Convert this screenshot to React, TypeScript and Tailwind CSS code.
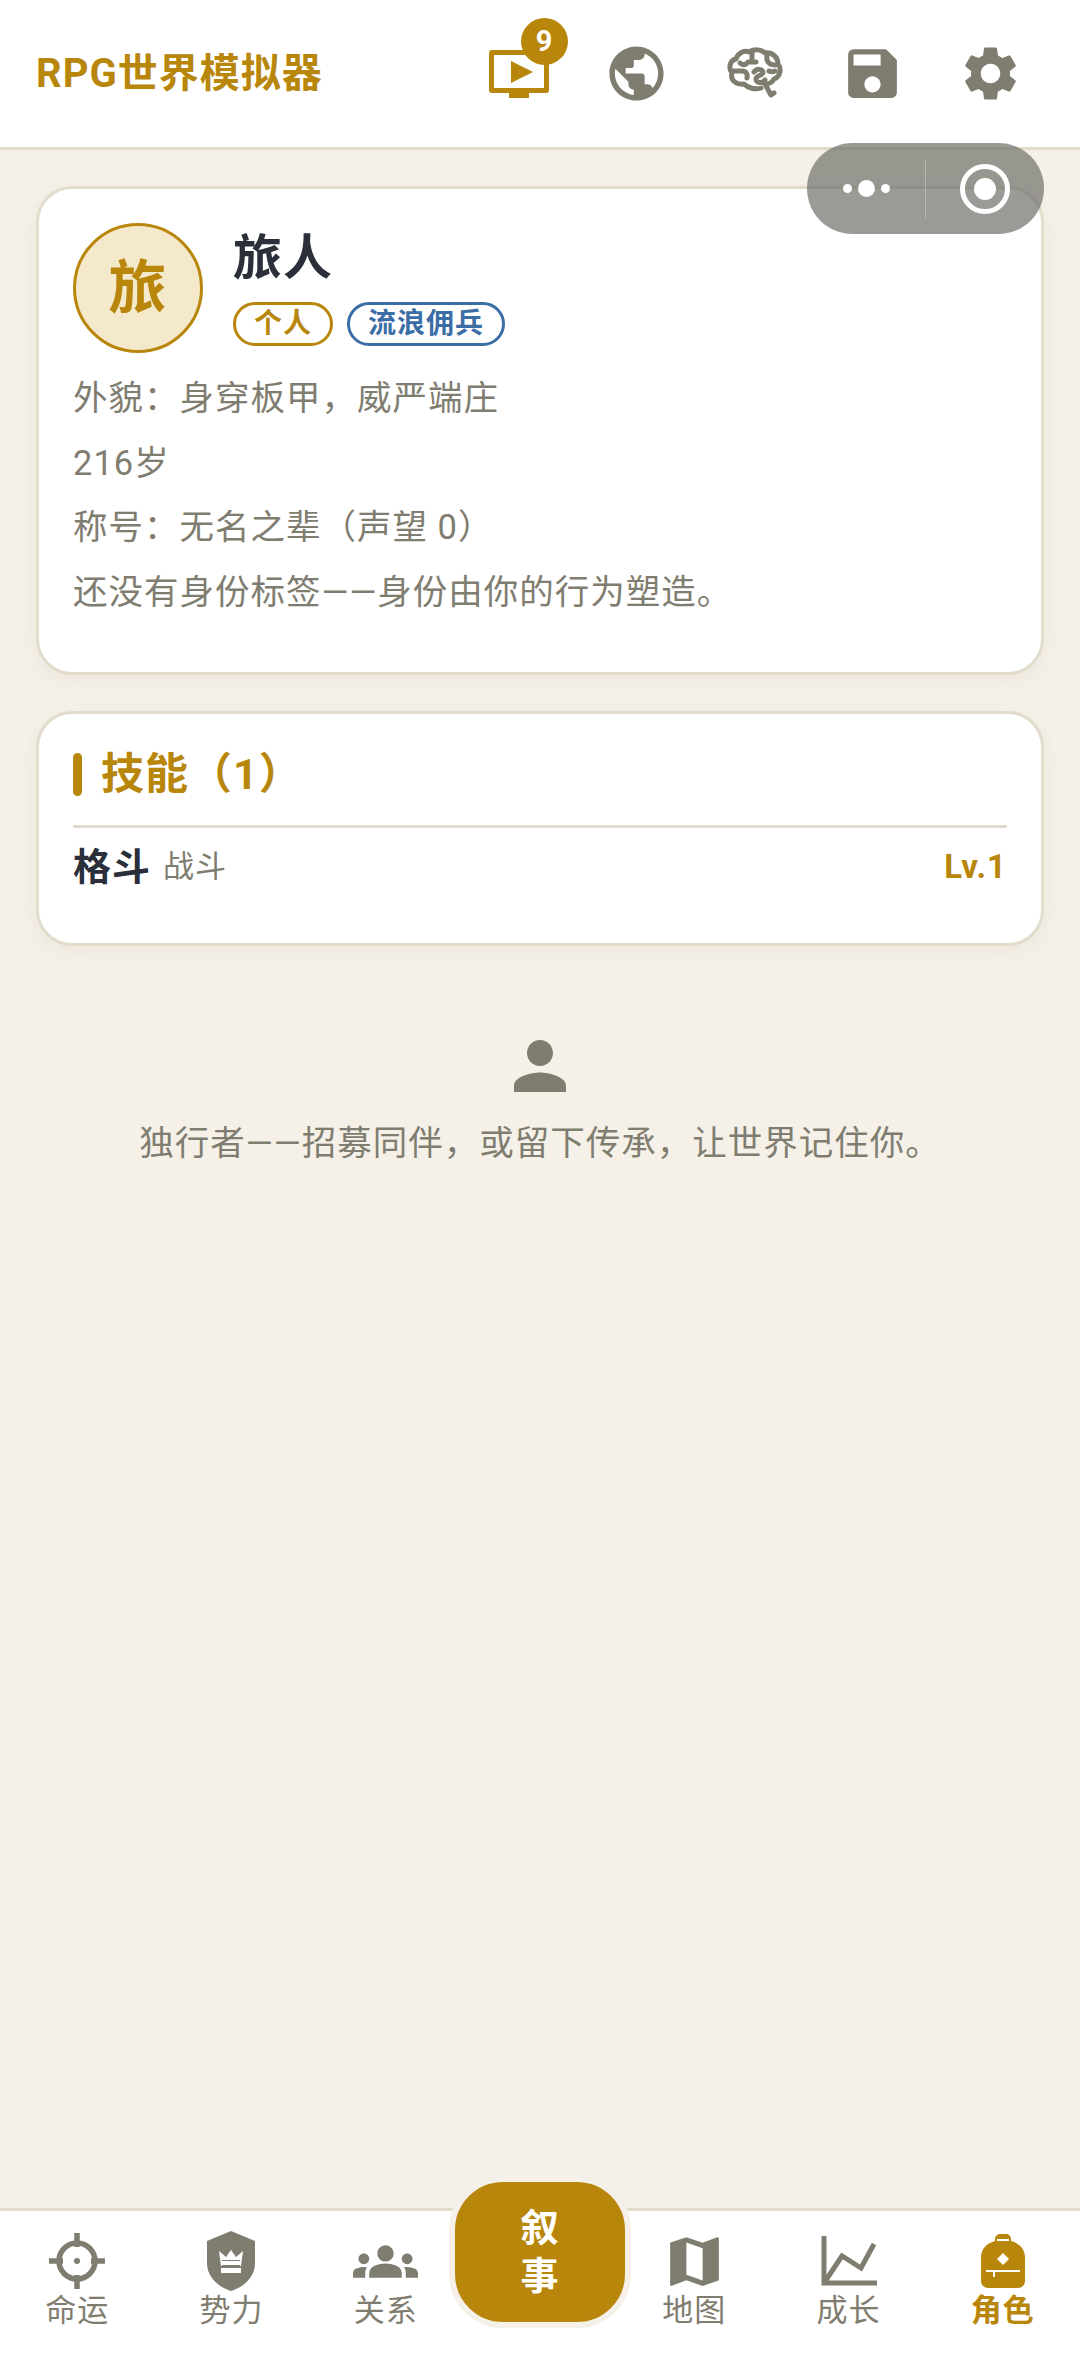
import { MdPublic, MdSave, MdSettings, MdPerson, MdGroups, MdMap } from 'react-icons/md';

const font = { fontFamily: 'Roboto, "Noto Sans CJK SC", sans-serif' };

const VideoIcon = () => (
  <svg width="60" height="48" viewBox="0 0 60 48" fill="#b8860b">
    <path d="M3 0h54a3 3 0 0 1 3 3v37a3 3 0 0 1-3 3H40v5H20v-5H3a3 3 0 0 1-3-3V3a3 3 0 0 1 3-3zm2 5v33h50V5z" fillRule="evenodd" />
    <path d="M22 11l22 11-22 11z" />
  </svg>
);

const BrainIcon = () => (
  <div className="flex h-[65px] w-[65px] items-center justify-center">
    <svg width="56" height="54" viewBox="0 0 56 54" fill="none" stroke="#7f7d70" strokeWidth="5" strokeLinecap="round" strokeLinejoin="round">
      <path d="M34 41c-6 2-13 0-17-4C9 38 3 33 5 26 1 21 3 13 9 12c2-6 8-9 13-7 5-3 12-3 16 1 7-1 13 4 13 11 4 5 2 13-4 15-2 4-5 5-9 5l6 11 3-2" />
      <path d="M25 5v9M21 15h8" />
      <path d="M6 24h9c4 0 6 3 5 7" />
      <path d="M13 16c2 2 4 2 6 1" />
      <path d="M27 25c3-4 8-3 9 0 0 4-7 3-7 7 0 4 6 5 9 1" />
      <path d="M40 9c-1 5 2 9 8 9" />
      <path d="M42 24c2 1 4 1 6 0" />
    </svg>
  </div>
);

const TargetIcon = () => (
  <svg width="56" height="56" viewBox="0 0 56 56" fill="none" stroke="#7f7d70" strokeWidth="5.5">
    <circle cx="28" cy="28" r="18" />
    <path d="M28 0v14M28 42v14M0 28h14M42 28h14" />
    <circle cx="28" cy="28" r="3" fill="#7f7d70" stroke="none" />
  </svg>
);

const ShieldIcon = () => (
  <svg width="50" height="60" viewBox="0 0 50 60">
    <path d="M25 0l24 10v22c0 14-11 24-24 28C12 56 1 46 1 32V10z" fill="#7f7d70" />
    <path d="M13 20l7 6 5-7 5 7 7-6-2 15H15z" fill="#fff" />
    <path d="M15 37h20v5H15z" fill="#fff" />
    <path d="M16 29h18v6H16z" fill="#7f7d70" />
    <path d="M16 30h18v4H16z" fill="#fff" />
  </svg>
);

const ChartIcon = () => (
  <svg width="56" height="50" viewBox="0 0 56 50" fill="none" stroke="#7f7d70">
    <path d="M3 0v47h53" strokeWidth="5" />
    <path d="M5 44l16-24 19 12 13-24" strokeWidth="5" />
  </svg>
);

const BagIcon = () => (
  <svg width="44" height="56" viewBox="0 0 44 56">
    <path d="M14 8V6a5 5 0 0 1 5-5h6a5 5 0 0 1 5 5v2c8 2 14 8 14 16v24a7 7 0 0 1-7 7H7a7 7 0 0 1-7-7V24C0 16 6 10 14 8z" fill="#b8860b" />
    <path d="M16 8h12V6H16z" fill="#fff" />
    <path d="M22 20l6 6-6 6-6-6z" fill="#fff" />
    <path d="M5 37h34v2H14v5h-2v-5H5z" fill="#fff" />
  </svg>
);

const navLeft = [
  { label: '命运', icon: <TargetIcon /> },
  { label: '势力', icon: <ShieldIcon /> },
  { label: '关系', icon: <MdGroups size={65} color="#7f7d70" /> },
];

const navRight = [
  { label: '地图', icon: <MdMap size={65} color="#7f7d70" className="my-[-3px]" /> },
  { label: '成长', icon: <ChartIcon /> },
];

const NavItem = ({ label, icon, active }: { label: string; icon: React.ReactNode; active?: boolean }) => (
  <div className="flex flex-1 flex-col items-center">
    <div className="flex h-[60px] items-center justify-center">{icon}</div>
    <span className={`text-[31px] leading-[40px] ${active ? 'font-bold text-[#b8860b]' : 'text-[#7f7d70]'}`}>{label}</span>
  </div>
);

const App = () => {
  return (
    <div className="relative flex h-[2363px] w-[1080px] flex-col overflow-hidden bg-[#f5f0e8] tracking-[1px]" style={font}>
      <header className="flex h-[150px] items-center justify-between border-b-[3px] border-[#e2dccd] bg-white pl-[36px] pr-[57px]">
        <h1 className="text-[40px] font-bold text-[#b8860b]">RPG世界模拟器</h1>
        <div className="flex items-center gap-[53px]">
          <div className="relative flex h-[65px] w-[65px] items-center justify-center">
            <VideoIcon />
            <span className="absolute right-[-17px] top-[-23px] flex h-[47px] w-[47px] items-center justify-center rounded-full bg-[#b8860b] text-[29px] font-bold text-white">9</span>
          </div>
          <MdPublic size={65} color="#7f7d70" />
          <BrainIcon />
          <MdSave size={65} color="#7f7d70" />
          <MdSettings size={65} color="#7f7d70" />
        </div>
      </header>

      <div className="absolute left-[807px] top-[143px] z-10 flex h-[91px] w-[237px] items-center rounded-full bg-[#6f6f6a]/70">
        <div className="flex flex-1 items-center justify-center gap-[6px]">
          <span className="h-[9px] w-[9px] rounded-full bg-white" />
          <span className="h-[17px] w-[17px] rounded-full bg-white" />
          <span className="h-[9px] w-[9px] rounded-full bg-white" />
        </div>
        <div className="h-[58px] w-px bg-white/30" />
        <div className="flex flex-1 items-center justify-center">
          <div className="flex h-[50px] w-[50px] items-center justify-center rounded-full border-[5px] border-white">
            <div className="h-[22px] w-[22px] rounded-full bg-white" />
          </div>
        </div>
      </div>

      <main className="flex flex-1 flex-col gap-[36px] px-[36px] pt-[36px]">
        <section className="h-[489px] rounded-[36px] border-[3px] border-[#e2dccd] bg-white p-[34px] shadow-[0_6px_18px_rgba(120,100,60,0.06)]">
          <div className="flex items-start gap-[30px]">
            <div className="flex h-[130px] w-[130px] items-center justify-center rounded-full border-[3px] border-[#b8860b] bg-[#f5e9cc] text-[58px] font-bold text-[#b8860b]">旅</div>
            <div>
              <div className="mt-[3px] text-[49px] font-bold leading-[66px] text-[#2a2f3a]">旅人</div>
              <div className="mt-[10px] flex gap-[14px]">
                <span className="flex h-[44px] items-center rounded-full border-[3px] border-[#b8860b] px-[18px] text-[28px] font-bold text-[#b8860b]">个人</span>
                <span className="flex h-[44px] items-center rounded-full border-[3px] border-[#3b6ea5] px-[18px] text-[28px] font-bold text-[#3b6ea5]">流浪佣兵</span>
              </div>
            </div>
          </div>
          <div className="mt-[13px] text-[34.5px] leading-[64.6px] text-[#7f7d70]">
            <p>{'外貌\uFF1A身穿板甲\uFF0C威严端庄'}</p>
            <p>216岁</p>
            <p>{'称号\uFF1A无名之辈\uFF08声望 0\uFF09'}</p>
            <p>还没有身份标签——身份由你的行为塑造。</p>
          </div>
        </section>

        <section className="h-[235px] rounded-[36px] border-[3px] border-[#e2dccd] bg-white px-[34px] pt-[39px] shadow-[0_6px_18px_rgba(120,100,60,0.06)]">
          <div className="flex items-center gap-[19px] pb-[29px]">
            <span className="h-[43px] w-[9px] rounded-full bg-[#b8860b]" />
            <h2 className="text-[43px] font-bold leading-[43px] text-[#b8860b]">{'技能\uFF081\uFF09'}</h2>
          </div>
          <div className="flex items-center justify-between border-t-[3px] border-[#e2dccd] pt-[14px]">
            <div className="flex items-center gap-[12px]">
              <span className="text-[38px] font-bold leading-[50px] text-[#2a2f3a]">格斗</span>
              <span className="text-[31px] text-[#7f7d70]">战斗</span>
            </div>
            <span className="text-[33px] font-bold text-[#b8860b]">Lv.1</span>
          </div>
        </section>

        <div className="mt-[45px] flex flex-col items-center">
          <MdPerson size={78} color="#7f7d70" />
          <p className="mt-[13px] text-[34.5px] text-[#7f7d70]">{'独行者——招募同伴\uFF0C或留下传承\uFF0C让世界记住你。'}</p>
        </div>
      </main>

      <footer className="relative flex h-[155px] items-start border-t-[3px] border-[#e2dccd] bg-white pt-[20px]">
        {navLeft.map((item) => <NavItem key={item.label} {...item} />)}
        <div className="flex-1">
          <div className="absolute left-1/2 top-[-35px] flex h-[152px] w-[182px] -translate-x-1/2 items-center justify-center rounded-[54px] border-[6px] border-[#f5f0e8] bg-[#b8860b] text-center text-[38px] font-bold leading-[48px] text-white">
            叙<br />事
          </div>
        </div>
        {navRight.map((item) => <NavItem key={item.label} {...item} />)}
        <NavItem label="角色" icon={<BagIcon />} active />
      </footer>
    </div>
  );
};

export default App;
